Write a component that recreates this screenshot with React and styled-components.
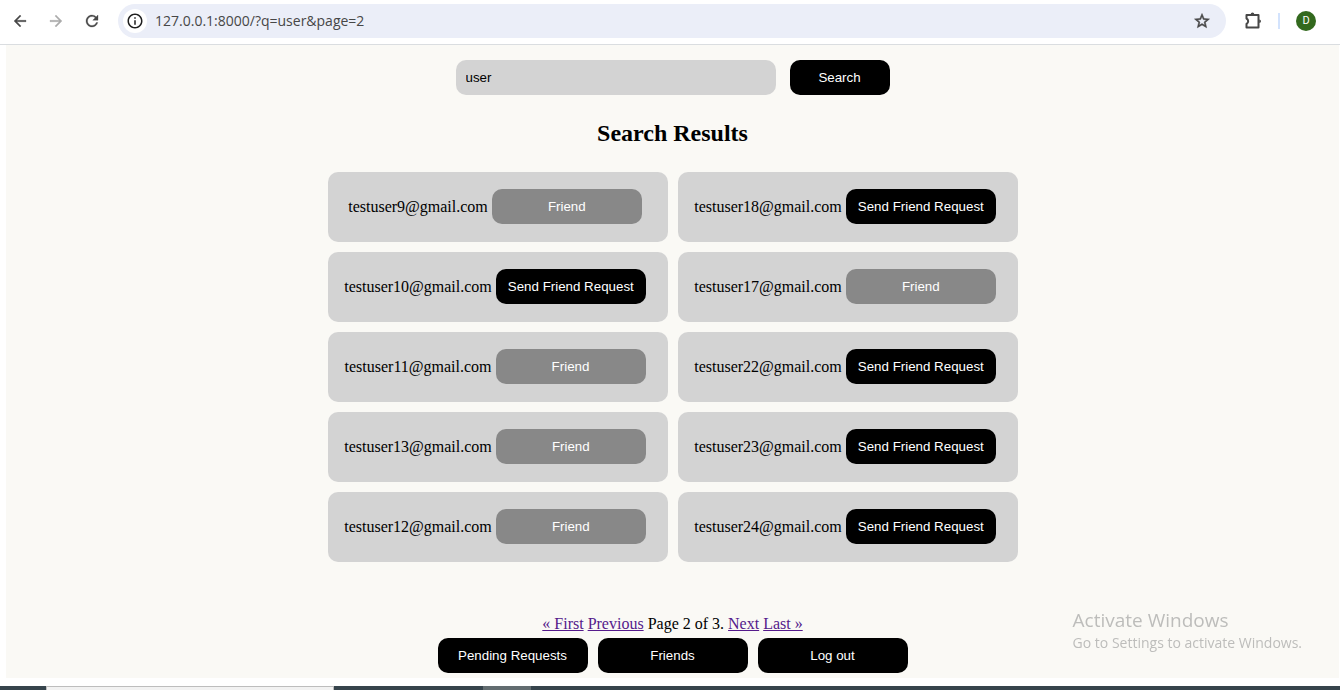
import React, { useState } from "react";
import styled, { createGlobalStyle } from "styled-components";
import { MdArrowBack, MdArrowForward, MdRefresh, MdInfoOutline, MdStarBorder } from "react-icons/md";

const GlobalStyle = createGlobalStyle`
  * { box-sizing: border-box; }
  body { margin: 0; background: #fff; }
`;

const Screen = styled.div`
  min-height: 100vh;
  display: flex;
  flex-direction: column;
  font-family: "Liberation Serif", "Times New Roman", serif;
  font-size: 16px;
  line-height: 18px;
  color: #000;
`;

const Toolbar = styled.header`
  display: flex;
  align-items: center;
  height: 45px;
  padding: 0 20px 3px 8px;
  border-bottom: 1px solid #dadde0;
  background: #fff;
`;

const IconButton = styled.button`
  display: flex;
  align-items: center;
  justify-content: center;
  width: 24px;
  height: 24px;
  padding: 0;
  border: 0;
  background: none;
  color: #474747;

  &:disabled { color: #ababab; }
`;

const Navigation = styled.nav`
  display: flex;
  gap: 12px;

  path + path { stroke: currentColor; stroke-width: 0.4; }
`;

const AddressBar = styled.div`
  flex: 1;
  display: flex;
  align-items: center;
  height: 34px;
  margin: 0 15px 0 14px;
  padding: 0 12px 0 5px;
  border-radius: 17px;
  background: #ebeef8;
`;

const SiteInfo = styled(IconButton)`
  border-radius: 12px;
  background: #fff;
  color: #1f1f1f;
`;

const Address = styled.input`
  flex: 1;
  min-width: 0;
  margin-left: 8px;
  padding: 0;
  border: 0;
  outline: 0;
  background: none;
  font: 14px/20px "Open Sans", sans-serif;
  color: #474747;
`;

const BookmarkButton = styled(IconButton)`
  path + path { stroke: currentColor; stroke-width: 0.7; }
`;

const Divider = styled.span`
  width: 2px;
  height: 16px;
  margin: 0 16px 0 13px;
  background: #d3e3fd;
`;

const Avatar = styled.button`
  width: 20px;
  height: 20px;
  padding: 0;
  border: 0;
  border-radius: 50%;
  background: #33691e;
  color: #fff;
  font: 11px/20px Roboto, sans-serif;
  margin-right: 4px;
`;

const Page = styled.main`
  flex: 1;
  display: flex;
  flex-direction: column;
  align-items: center;
  margin: 0 1px 8px 6px;
  padding: 15px 0 5px;
  background: #faf9f5;
`;

const SearchForm = styled.form`
  display: flex;
  gap: 14px;
`;

const SearchField = styled.input`
  width: 320px;
  height: 35px;
  padding: 0 10px;
  border: 0;
  border-radius: 10px;
  background: #d3d3d3;
  font-family: "Liberation Sans", Arial, sans-serif;
  color: #000;
`;

const Button = styled.button`
  width: ${({ $narrow }) => ($narrow ? 100 : 150)}px;
  height: 35px;
  padding: 0;
  border: 0;
  border-radius: 10px;
  background: #000;
  color: #fff;
  font-family: "Liberation Sans", Arial, sans-serif;

  &:disabled { background: #888; }
`;

const Heading = styled.h2`
  margin: 24px 0;
  font-size: 24px;
  line-height: 29px;
`;

const Results = styled.ul`
  display: grid;
  grid-template-columns: repeat(2, 340px);
  gap: 10px;
  margin: 0;
  padding: 0;
  list-style: none;
`;

const Card = styled.li`
  display: flex;
  align-items: flex-start;
  justify-content: center;
  gap: 4px;
  height: 70px;
  padding: 17px 5px 0 0;
  border-radius: 10px;
  background: #d3d3d3;
  line-height: 36px;
`;

const Pagination = styled.nav`
  display: flex;
  gap: 4px;
  margin: 53px 0 5px;
`;

const PageLink = styled.a`
  color: #551a8b;
`;

const Actions = styled.div`
  display: flex;
  gap: 10px;
`;

const Watermark = styled.aside`
  position: fixed;
  right: 38px;
  bottom: 37px;
  font: 14px/20px "Open Sans", sans-serif;
  color: #bdbdbb;
  pointer-events: none;
`;

const WatermarkTitle = styled.div`
  font-size: 19px;
  line-height: 26px;
`;

const Taskbar = styled.footer`
  display: flex;
  height: 4px;
  padding-left: 46px;
  background: #36444c;
`;

const TaskbarSearch = styled.div`
  width: 288px;
  margin-right: 149px;
  border: 1px solid #bdbdbd;
  border-bottom: 0;
  background: #f2f2f2;
`;

const TaskbarItem = styled.div`
  width: 48px;
  background: #626c70;
`;

const people = [
  ["testuser9@gmail.com", true],
  ["testuser18@gmail.com", false],
  ["testuser10@gmail.com", false],
  ["testuser17@gmail.com", true],
  ["testuser11@gmail.com", true],
  ["testuser22@gmail.com", false],
  ["testuser13@gmail.com", true],
  ["testuser23@gmail.com", false],
  ["testuser12@gmail.com", true],
  ["testuser24@gmail.com", false],
];

const ExtensionsIcon = () => (
  <svg width="20" height="20" viewBox="0 0 20 20" fill="none" stroke="currentColor" strokeWidth="2" strokeLinejoin="round">
    <path d="M3.500 4H15.500V16.500H3.500V13A3.100 3.100 0 0 0 3.500 7.500Z" />
    <path d="M7.700 3.200a1.800 1.800 0 0 1 3.600 0ZM16.200 8.400a1.800 1.800 0 0 1 0 3.600Z" fill="currentColor" stroke="none" />
  </svg>
);

export default function App() {
  const [query, setQuery] = useState("user");

  return (
    <Screen>
      <GlobalStyle />
      <Toolbar>
        <Navigation aria-label="Browser">
          <IconButton aria-label="Back"><MdArrowBack size={18} /></IconButton>
          <IconButton aria-label="Forward" disabled><MdArrowForward size={18} /></IconButton>
          <IconButton aria-label="Reload"><MdRefresh size={18} /></IconButton>
        </Navigation>
        <AddressBar>
          <SiteInfo aria-label="Site information"><MdInfoOutline size={18} /></SiteInfo>
          <Address aria-label="Address" defaultValue="127.0.0.1:8000/?q=user&page=2" />
          <BookmarkButton aria-label="Bookmark"><MdStarBorder size={18} /></BookmarkButton>
        </AddressBar>
        <IconButton aria-label="Extensions"><ExtensionsIcon /></IconButton>
        <Divider />
        <Avatar aria-label="Profile D">D</Avatar>
      </Toolbar>
      <Page>
        <SearchForm onSubmit={(event) => event.preventDefault()}>
          <SearchField aria-label="Search users" value={query} onChange={(event) => setQuery(event.target.value)} />
          <Button $narrow>Search</Button>
        </SearchForm>
        <Heading>Search Results</Heading>
        <Results>
          {people.map(([email, isFriend]) => (
            <Card key={email}>
              <span>{email}</span>
              <Button disabled={isFriend}>{isFriend ? "Friend" : "Send Friend Request"}</Button>
            </Card>
          ))}
        </Results>
        <Pagination aria-label="Pages">
          <PageLink href="#first">« First</PageLink>
          <PageLink href="#previous">Previous</PageLink>
          <span>Page 2 of 3.</span>
          <PageLink href="#next">Next</PageLink>
          <PageLink href="#last">Last »</PageLink>
        </Pagination>
        <Actions>
          <Button>Pending Requests</Button>
          <Button>Friends</Button>
          <Button>Log out</Button>
        </Actions>
      </Page>
      <Watermark>
        <WatermarkTitle>Activate Windows</WatermarkTitle>
        Go to Settings to activate Windows.
      </Watermark>
      <Taskbar>
        <TaskbarSearch />
        <TaskbarItem />
      </Taskbar>
    </Screen>
  );
}
